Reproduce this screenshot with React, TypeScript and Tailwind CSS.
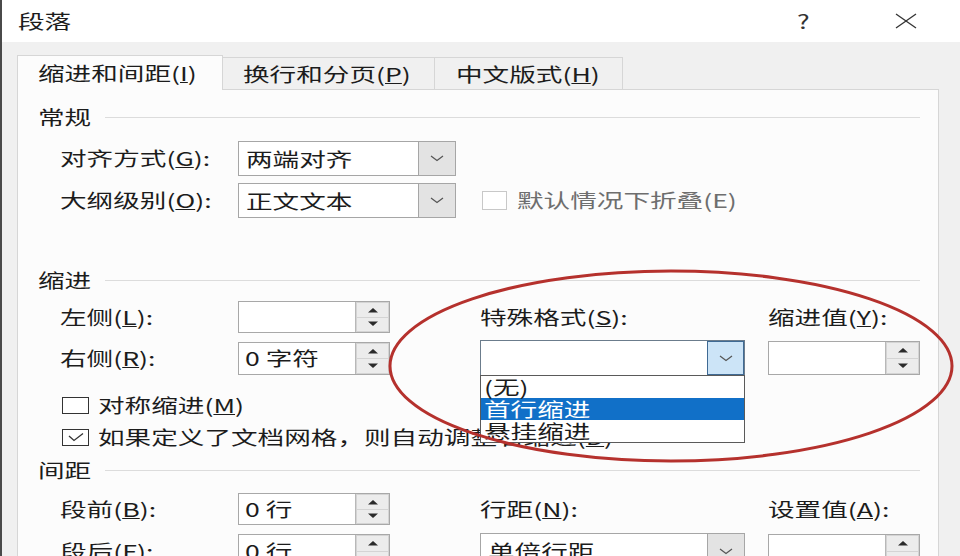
import React from "react";

function T({ children, className = "" }: { children: React.ReactNode; className?: string }) {
  return (
    <span className={"inline-block origin-left scale-x-[1.4] whitespace-nowrap leading-[20px] " + className}>
      {children}
    </span>
  );
}

function Chevron() {
  return (
    <svg width="14" height="7" viewBox="0 0 14 7">
      <polyline points="1,1 7,5.5 13,1" fill="none" stroke="#555" strokeWidth="1.2" />
    </svg>
  );
}

function Dropdown({
  value,
  w,
  h,
  focused = false,
  children,
}: {
  value?: string;
  w: string;
  h: string;
  focused?: boolean;
  children?: React.ReactNode;
}) {
  return (
    <div className={"relative flex bg-white border " + w + " " + h + " " + (focused ? "border-[#6b7c8c]" : "border-[#a6a6a6]")}>
      <div className="flex flex-1 items-center pl-[7px]">{value ? <T>{value}</T> : null}</div>
      <div
        className={
          "flex w-[37px] items-center justify-center border-l " +
          (focused ? "border-[#3f6a94] bg-[#cce4f7] border" : "border-[#a6a6a6] bg-[#e3e3e3]")
        }
      >
        <Chevron />
      </div>
      {children}
    </div>
  );
}

function Arrow({ up }: { up: boolean }) {
  return (
    <svg width="12" height="6" viewBox="0 0 12 6">
      <polygon points={up ? "1,5.5 6,1 11,5.5" : "1,0.5 6,5 11,0.5"} fill="#2a2a2a" />
    </svg>
  );
}

function Spin({ value, h }: { value?: string; h: string }) {
  return (
    <div className={"flex w-[152px] border border-[#a8a8a8] bg-white " + h}>
      <div className="flex flex-1 items-center pl-[6px]">{value ? <T>{value}</T> : null}</div>
      <div className="flex w-[34px] flex-col gap-px border-l border-[#b8b8b8] bg-[#d4d4d4] p-px">
        <div className="flex flex-1 items-center justify-center bg-[#ececec]">
          <Arrow up />
        </div>
        <div className="flex flex-1 items-center justify-center bg-[#ececec]">
          <Arrow up={false} />
        </div>
      </div>
    </div>
  );
}

function Header({ label, mt }: { label: string; mt: string }) {
  return (
    <div className={"flex h-[20px] items-center pl-[20px] pr-[18px] " + mt}>
      <div className="w-[67px]">
        <T>{label}</T>
      </div>
      <div className="h-px flex-1 bg-[#dcdcdc]" />
    </div>
  );
}

function Label({ children }: { children: React.ReactNode }) {
  return (
    <div className="w-[178px]">
      <T>{children}</T>
    </div>
  );
}

export default function App() {
  return (
    <div className="relative h-[556px] w-[960px] overflow-hidden border-l-2 border-[#4a4a4a] bg-[#f0f0f0] font-['Noto_Sans_CJK_SC','Noto_Sans',sans-serif] text-[19px] text-[#1c1c1c]">
      {/* Title bar */}
      <div className="flex h-[42px] items-center bg-white pl-[16px] pr-[43px]">
        <T>段落</T>
        <div className="flex-1" />
        <div className="w-[98px]">
          <T className="text-[#333]">?</T>
        </div>
        <svg width="22" height="16" viewBox="0 0 22 16">
          <line x1="1" y1="1" x2="21" y2="15" stroke="#333" strokeWidth="1.3" />
          <line x1="21" y1="1" x2="1" y2="15" stroke="#333" strokeWidth="1.3" />
        </svg>
      </div>

      {/* Tabs */}
      <div className="mt-[13px] flex h-[34px] items-end pl-[15px]">
        <div className="relative z-10 -mb-px flex h-[35px] w-[206px] items-center border border-b-0 border-[#d6d6d6] bg-[#fcfcfc] pl-[20px]">
          <T>
            缩进和间距(<u>I</u>)
          </T>
        </div>
        <div className="flex h-[32px] w-[212px] items-center border border-b-0 border-l-0 border-[#d6d6d6] bg-[#f0f0f0] pl-[20px]">
          <T>
            换行和分页(<u>P</u>)
          </T>
        </div>
        <div className="flex h-[32px] w-[188px] items-center border border-b-0 border-l-0 border-[#d6d6d6] bg-[#f0f0f0] pl-[21px]">
          <T>
            中文版式(<u>H</u>)
          </T>
        </div>
      </div>

      {/* Panel */}
      <div className="ml-[15px] h-[480px] w-[922px] border border-[#d6d6d6] bg-[#fcfcfc]">
        <Header label="常规" mt="mt-[17px]" />

        <div className="mt-[14px] flex h-[35px] items-center pl-[42px]">
          <Label>
            对齐方式(<u>G</u>):
          </Label>
          <Dropdown value="两端对齐" w="w-[218px]" h="h-[35px]" />
        </div>

        <div className="mt-[7px] flex h-[35px] items-center pl-[42px]">
          <Label>
            大纲级别(<u>O</u>):
          </Label>
          <Dropdown value="正文文本" w="w-[218px]" h="h-[35px]" />
          <div className="ml-[26px] h-[19px] w-[25px] border border-[#c8c8c8] bg-white" />
          <div className="ml-[10px]">
            <T className="text-[#6e6e6e]">默认情况下折叠(E)</T>
          </div>
        </div>

        <Header label="缩进" mt="mt-[52px]" />

        <div className="mt-[9px] flex h-[36px] items-center pl-[42px]">
          <Label>
            左侧(<u>L</u>):
          </Label>
          <Spin h="h-[32px]" />
          <div className="ml-[90px] w-[265px]">
            <T>
              特殊格式(<u>S</u>):
            </T>
          </div>
          <div className="ml-[23px]">
            <T>
              缩进值(<u>Y</u>):
            </T>
          </div>
        </div>

        <div className="mt-[5px] flex h-[36px] items-center pl-[42px]">
          <Label>
            右侧(<u>R</u>):
          </Label>
          <Spin value="0 字符" h="h-[33px]" />
          <div className="ml-[90px]">
            <Dropdown w="w-[265px]" h="h-[36px]" focused>
              <div className="absolute left-[-1px] top-full z-20 w-[265px] border border-[#5a5a5a] bg-white">
                <div className="flex h-[22px] items-center pl-[3px]">
                  <T>(无)</T>
                </div>
                <div className="flex h-[22px] items-center bg-[#1170c8] pl-[3px] text-white">
                  <T>首行缩进</T>
                </div>
                <div className="flex h-[22px] items-center pl-[3px]">
                  <T>悬挂缩进</T>
                </div>
              </div>
            </Dropdown>
          </div>
          <div className="ml-[23px]">
            <Spin h="h-[34px]" />
          </div>
        </div>

        <div className="mt-[19px] flex h-[20px] items-center pl-[44px]">
          <div className="h-[17px] w-[27px] border-[1.5px] border-[#333] bg-white" />
          <div className="ml-[9px]">
            <T>
              对称缩进(<u>M</u>)
            </T>
          </div>
        </div>

        <div className="mt-[12px] flex h-[20px] items-center pl-[44px]">
          <div className="flex h-[17px] w-[27px] items-center justify-center border-[1.5px] border-[#333] bg-white">
            <svg width="18" height="10" viewBox="0 0 18 10">
              <polyline points="2,4 7,8.5 16,1.5" fill="none" stroke="#333" strokeWidth="1.3" />
            </svg>
          </div>
          <div className="ml-[9px]">
            <T>
              如果定义了文档网格，则自动调整右缩进(<u>D</u>)
            </T>
          </div>
        </div>

        <Header label="间距" mt="mt-[13px]" />

        <div className="mt-[13px] flex h-[32px] items-center pl-[42px]">
          <Label>
            段前(<u>B</u>):
          </Label>
          <Spin value="0 行" h="h-[32px]" />
          <div className="ml-[90px] w-[265px]">
            <T>
              行距(<u>N</u>):
            </T>
          </div>
          <div className="ml-[23px]">
            <T>
              设置值(<u>A</u>):
            </T>
          </div>
        </div>

        <div className="mt-[8px] flex h-[36px] items-center pl-[42px]">
          <Label>
            段后(<u>F</u>):
          </Label>
          <Spin value="0 行" h="h-[34px]" />
          <div className="ml-[90px]">
            <Dropdown value="单倍行距" w="w-[265px]" h="h-[36px]" />
          </div>
          <div className="ml-[23px]">
            <Spin h="h-[34px]" />
          </div>
        </div>
      </div>

      {/* Red annotation ellipse */}
      <svg className="pointer-events-none absolute left-0 top-0 z-30" width="958" height="556" viewBox="0 0 958 556">
        <ellipse cx="669" cy="366" rx="281" ry="95" fill="none" stroke="#b5312d" strokeWidth="3" />
      </svg>
    </div>
  );
}
